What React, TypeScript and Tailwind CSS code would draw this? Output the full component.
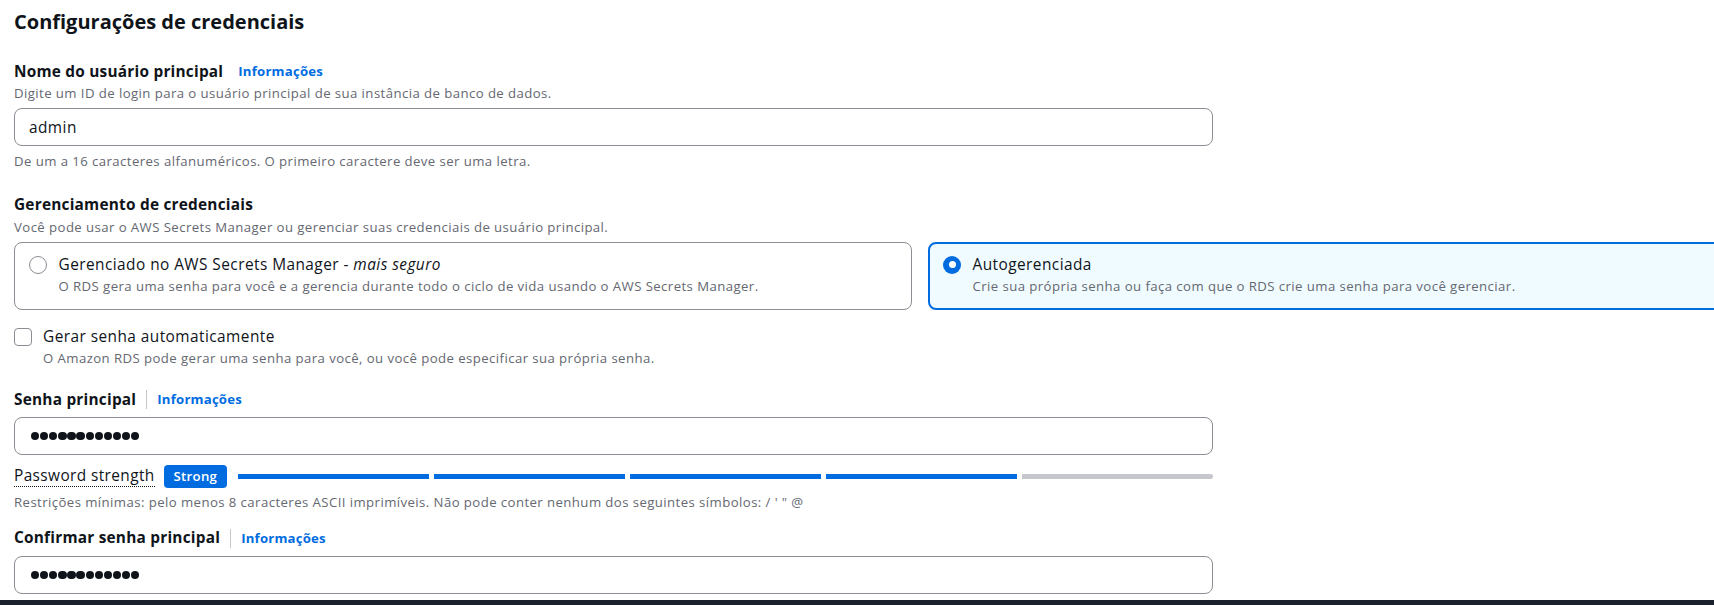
import { useState } from "react"

const FONT = "font-['Open_Sans','Noto_Sans','Liberation_Sans',sans-serif]"

// text scales used across the form
const SMALL = "text-[13.2px] leading-[17.6px] tracking-[0.42px] text-[#656871]"
const BODY = "text-[15.4px] leading-[22px] tracking-[0.45px] text-[#0f141a]"

function InfoLink({ divider }: { divider?: boolean }) {
  return (
    <>
      {divider && <span className="mx-[10px] h-[19px] w-px bg-[#c6c6cd]" />}
      <a
        href="#"
        className={`text-[13.2px] font-bold leading-[17.6px] tracking-[0.2px] text-[#006ce0] ${divider ? "" : "ml-[15px]"}`}
      >
        Informações
      </a>
    </>
  )
}

function FieldLabel({ text, divider }: { text: string; divider?: boolean }) {
  return (
    <div className="flex items-center">
      <span className="text-[15.4px] font-bold leading-[22px] tracking-[0.22px] text-[#0f141a]">{text}</span>
      <InfoLink divider={divider} />
    </div>
  )
}

function PasswordBox() {
  // masked value, drawn as round dots
  return (
    <div className="mt-[6.5px] flex h-[38px] w-[1199px] items-center rounded-[8px] border border-[#8c8c94] pl-[16px]">
      <div className="flex gap-[0.8px]">
        {Array.from({ length: 12 }).map((_, i) => (
          <span key={i} className="h-[8.3px] w-[8.3px] rounded-full bg-[#0f141a]" />
        ))}
      </div>
    </div>
  )
}

function Tile({
  title,
  note,
  description,
  selected,
  onSelect,
}: {
  title: string
  note?: string
  description: string
  selected: boolean
  onSelect: () => void
}) {
  return (
    <button
      type="button"
      onClick={onSelect}
      className={`flex h-[68px] items-start rounded-[8px] text-left ${
        selected
          ? "border-2 border-[#006ce0] bg-[#f0fbff] pl-[13px] pt-[9.5px]"
          : "border border-[#8c8c94] bg-white pl-[14px] pt-[10.5px]"
      }`}
    >
      <span className="flex h-[22px] items-center">
        {selected ? (
          <span className="flex h-[18px] w-[18px] items-center justify-center rounded-full bg-[#006ce0]">
            <span className="h-[7px] w-[7px] rounded-full bg-white" />
          </span>
        ) : (
          <span className="h-[18px] w-[18px] rounded-full border-[1.5px] border-[#8c8c94] bg-white" />
        )}
      </span>
      <span className="ml-[11.5px] flex flex-col">
        <span className={BODY}>
          {title}
          {note && (
            <>
              {" - "}
              <i>{note}</i>
            </>
          )}
        </span>
        <span className={`mt-[2px] ${SMALL}`}>{description}</span>
      </span>
    </button>
  )
}

export default function App() {
  const [mode, setMode] = useState<"secrets" | "self">("self")
  const [autoGen, setAutoGen] = useState(false)
  const [username, setUsername] = useState("admin")

  return (
    <div className={`flex h-[605px] w-[1714px] flex-col overflow-hidden bg-white ${FONT}`}>
      <div className="flex-1 pl-[14px] pt-[9.5px]">
        <h2 className="text-[20px] font-bold leading-[24px] text-[#0f141a]">
          Configurações de credenciais
        </h2>

        <div className="mt-[27.5px]">
          <FieldLabel text="Nome do usuário principal" />
          <p className={`mt-[2px] ${SMALL}`}>
            Digite um ID de login para o usuário principal de sua instância de banco de dados.
          </p>
          <input
            value={username}
            onChange={(e) => setUsername(e.target.value)}
            className={`mt-[5.5px] h-[38px] w-[1199px] rounded-[8px] border border-[#8c8c94] px-[14px] outline-none ${BODY}`}
          />
          <p className={`mt-[6.5px] ${SMALL}`}>
            De um a 16 caracteres alfanuméricos. O primeiro caractere deve ser uma letra.
          </p>
        </div>

        <div className="mt-[24px]">
          <div className="text-[15.4px] font-bold leading-[22px] tracking-[0.22px] text-[#0f141a]">
            Gerenciamento de credenciais
          </div>
          <p className={`mt-[2.7px] ${SMALL}`}>
            Você pode usar o AWS Secrets Manager ou gerenciar suas credenciais de usuário principal.
          </p>
          <div className="mt-[6px] grid grid-cols-[898px_898px] gap-[16px]">
            <Tile
              title="Gerenciado no AWS Secrets Manager"
              note="mais seguro"
              description="O RDS gera uma senha para você e a gerencia durante todo o ciclo de vida usando o AWS Secrets Manager."
              selected={mode === "secrets"}
              onSelect={() => setMode("secrets")}
            />
            <Tile
              title="Autogerenciada"
              description="Crie sua própria senha ou faça com que o RDS crie uma senha para você gerenciar."
              selected={mode === "self"}
              onSelect={() => setMode("self")}
            />
          </div>
        </div>

        <label className="mt-[16px] flex items-start">
          <span className="flex h-[22px] items-center">
            <input
              type="checkbox"
              checked={autoGen}
              onChange={(e) => setAutoGen(e.target.checked)}
              className="h-[18px] w-[18px] appearance-none rounded-[4px] border-[1.5px] border-[#8c8c94] bg-white checked:bg-[#006ce0]"
            />
          </span>
          <span className="ml-[11px] flex flex-col">
            <span className={BODY}>Gerar senha automaticamente</span>
            <span className={`mt-[2px] ${SMALL}`}>
              O Amazon RDS pode gerar uma senha para você, ou você pode especificar sua própria senha.
            </span>
          </span>
        </label>

        <div className="mt-[20.5px]">
          <FieldLabel text="Senha principal" divider />
          <PasswordBox />

          <div className="mt-[10px] flex h-[23.3px] w-[1199px] items-center">
            <span className="border-b border-dotted border-[#0f141a] text-[15.4px] leading-[20px] tracking-[0.4px] text-[#0f141a]">
              Password strength
            </span>
            <span className="ml-[9px] flex h-[23.3px] w-[63.4px] items-center justify-center rounded-[4px] bg-[#006ce0] text-[13.2px] font-semibold tracking-[0.3px] text-white">
              Strong
            </span>
            <div className="ml-[10.5px] flex flex-1 gap-[5px]">
              <span className="h-[5px] flex-1 bg-[#006ce0]" />
              <span className="h-[5px] flex-1 bg-[#006ce0]" />
              <span className="h-[5px] flex-1 bg-[#006ce0]" />
              <span className="h-[5px] flex-1 bg-[#006ce0]" />
              <span className="h-[5px] flex-1 rounded-r-full bg-[#c6c6cd]" />
            </div>
          </div>
          <p className={`mt-[5.4px] ${SMALL}`}>
            Restrições mínimas: pelo menos 8 caracteres ASCII imprimíveis. Não pode conter nenhum dos seguintes símbolos: / ' " @
          </p>
        </div>

        <div className="mt-[16px]">
          <FieldLabel text="Confirmar senha principal" divider />
          <div className="mt-[0.8px]">
            <PasswordBox />
          </div>
        </div>
      </div>
      <div className="h-[5px] bg-[#1b222d]" />
    </div>
  )
}
